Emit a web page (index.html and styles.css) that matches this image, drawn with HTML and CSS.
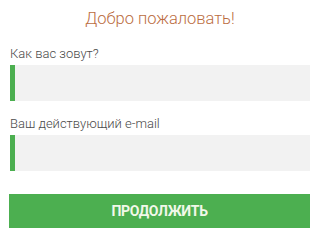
FILE: index.html
```
<!DOCTYPE html>
<html lang="ru">

<head>
    <meta charset="UTF-8">
    <meta name="viewport" content="width=device-width, initial-scale=1.0">
    <title>Добро пожаловать</title>
    <link rel="stylesheet" href="styles.css">
</head>

<body>
    <form class="signup">
        <h2 class="title">Добро пожаловать!</h2>
        <label class="field">
            <span class="field-label">Как вас зовут?</span>
            <input type="text" class="field-input">
        </label>
        <label class="field">
            <span class="field-label">Ваш действующий e-mail</span>
            <input type="email" class="field-input">
        </label>
        <button type="button" class="submit">ПРОДОЛЖИТЬ</button>
    </form>
</body>

</html>
```
FILE: styles.css
```
* {
    margin: 0;
    padding: 0;
    box-sizing: border-box;
}

body {
    font-family: Roboto, "Noto Sans", sans-serif;
    background: #fff;
}

.signup {
    display: flex;
    flex-direction: column;
    padding: 8px 9px 0 10px;
}

.title {
    font-size: 16.5px;
    font-weight: 300;
    line-height: 22px;
    color: #bb6d3f;
    text-align: center;
    margin-bottom: 16px;
}

.field {
    display: flex;
    flex-direction: column;
    gap: 3px;
    margin-bottom: 15px;
}

.field-label {
    font-size: 13px;
    font-weight: 300;
    line-height: 16px;
    color: #4a4a4a;
}

.field-input {
    height: 36px;
    border: none;
    border-left: 5px solid #4caf50;
    background: #f2f2f2;
    outline: none;
}

.submit {
    margin-top: 8px;
    margin-left: -1px;
    height: 34px;
    border: none;
    background: #4caf50;
    color: #f1f8e9;
    font-family: Roboto, "Noto Sans", sans-serif;
    font-size: 14px;
    font-weight: 700;
    letter-spacing: -0.3px;
}
```
